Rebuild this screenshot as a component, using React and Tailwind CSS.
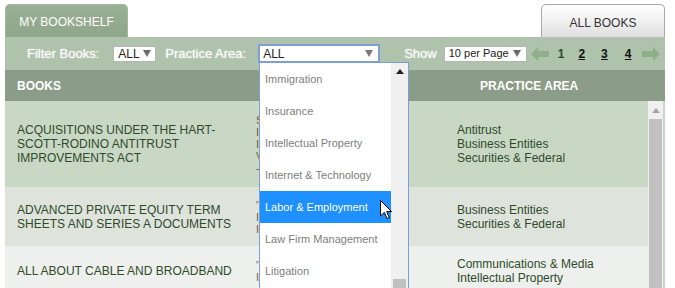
import React from "react";

const F = { fontFamily: '"Liberation Sans", Arial, sans-serif' };

function Arrow({ dir }) {
  return (
    <svg width="18" height="14" viewBox="0 0 18 14">
      {dir === "left" ? (
        <path d="M0 7 L7 0 L7 4 L18 4 L18 10 L7 10 L7 14 Z" fill="#8fae8a" />
      ) : (
        <path d="M18 7 L11 0 L11 4 L0 4 L0 10 L11 10 L11 14 Z" fill="#8fae8a" />
      )}
    </svg>
  );
}

function Caret({ color = "#6b6b6b" }) {
  return (
    <svg width="8" height="7" viewBox="0 0 8 7" className="shrink-0">
      <path d="M0 0 L8 0 L4 7 Z" fill={color} />
    </svg>
  );
}

const rows = [
  {
    h: "h-[86px]",
    bg: "bg-[#c9d8c5]",
    title: ["ACQUISITIONS UNDER THE HART-", "SCOTT-RODINO ANTITRUST", "IMPROVEMENTS ACT"],
    mid: ["Supplement", "Issue 2016", "Index", "Volume 1", "- more"],
    area: ["Antitrust", "Business Entities", "Securities & Federal"],
  },
  {
    h: "h-[59px]",
    bg: "bg-[#dee3dc]",
    title: ["ADVANCED PRIVATE EQUITY TERM", "SHEETS AND SERIES A DOCUMENTS"],
    mid: ["'Year", "Issue", "Index"],
    area: ["Business Entities", "Securities & Federal"],
  },
  {
    h: "h-[50px]",
    bg: "bg-[#edf0ec]",
    title: ["ALL ABOUT CABLE AND BROADBAND"],
    mid: ["'Year", "Issue"],
    area: ["Communications & Media", "Intellectual Property"],
  },
];

const options = [
  "Immigration",
  "Insurance",
  "Intellectual Property",
  "Internet & Technology",
  "Labor & Employment",
  "Law Firm Management",
  "Litigation",
];

export default function App() {
  return (
    <div style={F} className="relative w-[675px] h-[288px] overflow-hidden bg-white pt-[4px] pl-[5px] pr-[10px]">
      {/* tabs */}
      <div className="flex justify-between h-[33px] items-end">
        <div className="w-[123px] h-[33px] rounded-t-[5px] bg-gradient-to-b from-[#9bb097] to-[#8ea68a] border border-[#a4b6a0] border-b-0 flex items-center justify-center text-white text-[12px] pt-[2px]">
          MY BOOKSHELF
        </div>
        <div className="w-[124px] h-[33px] rounded-t-[5px] bg-gradient-to-b from-[#ffffff] via-[#f1f1f1] to-[#dedede] border border-[#a9a9a9] border-b-0 flex items-center justify-center text-[#333] text-[12px] pt-[3px]">
          ALL BOOKS
        </div>
      </div>

      {/* filter bar */}
      <div className="h-[33px] bg-[#afc2ab] flex items-center whitespace-nowrap text-white text-[13px] [text-shadow:0_0_2px_rgba(255,255,255,0.6)]">
        <span className="shrink-0 ml-[22px]">Filter Books:</span>
        <div className="shrink-0 ml-[14px] w-[43px] h-[16px] bg-white border border-[#b5b5b5] flex items-center justify-between pl-[4px] pr-[4px] text-[#222] text-[12px] [text-shadow:none]">
          <span>ALL</span>
          <Caret />
        </div>
        <span className="shrink-0 ml-[9px]">Practice Area:</span>
        <div className="shrink-0 ml-[12px] w-[122px] h-[19px] bg-white border-[2px] border-[#7c9fd6] flex items-center justify-between pl-[3px] pr-[5px] text-[#222] text-[12px] [text-shadow:none]">
          <span>ALL</span>
          <Caret color="#7a7a7a" />
        </div>
        <span className="shrink-0 ml-[24px]">Show</span>
        <div className="shrink-0 ml-[7px] w-[83px] h-[16px] bg-white border border-[#b5b5b5] flex items-center justify-between pl-[4px] pr-[5px] text-[#222] text-[11px] [text-shadow:none]">
          <span>10 per Page</span>
          <Caret />
        </div>
        <span className="shrink-0 ml-[4px] flex items-center">
          <Arrow dir="left" />
        </span>
        <span className="shrink-0 ml-[9px] text-[#1f4f1f] text-[12px] font-bold [text-shadow:none]">1</span>
        <span className="shrink-0 ml-[14px] text-[#111] text-[12px] font-bold underline [text-shadow:none]">2</span>
        <span className="shrink-0 ml-[16px] text-[#111] text-[12px] font-bold underline [text-shadow:none]">3</span>
        <span className="shrink-0 ml-[17px] text-[#111] text-[12px] font-bold underline [text-shadow:none]">4</span>
        <span className="shrink-0 ml-[11px] flex items-center">
          <Arrow dir="right" />
        </span>
      </div>

      {/* header */}
      <div className="h-[31px] bg-[#8b9c88] flex items-center text-white text-[12px] font-bold">
        <div className="w-[452px] pl-[12px]">BOOKS</div>
        <div className="pl-[23px]">PRACTICE AREA</div>
      </div>

      {/* body */}
      <div className="flex border-r-[2px] border-[#c9d8c5]">
        <div className="flex-1 flex flex-col">
          {rows.map((r, i) => (
            <div key={i} className={`${r.h} ${r.bg} flex items-center text-[12px] leading-[14px] text-[#2f4a2b]`}>
              <div className="w-[251px] shrink-0 pl-[12px]">
                {r.title.map((t) => (
                  <div key={t}>{t}</div>
                ))}
              </div>
              <div className="w-[201px] shrink-0">
                <div className="w-[3px] overflow-hidden whitespace-nowrap text-[#7a5a2a] text-[11px] leading-[12px]">
                  {r.mid.map((t) => (
                    <div key={t}>{t}</div>
                  ))}
                </div>
              </div>
              <div>
                {r.area.map((t) => (
                  <div key={t}>{t}</div>
                ))}
              </div>
            </div>
          ))}
        </div>
        <div className="w-[15px] bg-[#f0f0f0] flex flex-col items-center">
          <div className="h-[18px] flex items-center justify-center">
            <svg width="8" height="5" viewBox="0 0 8 5">
              <path d="M0 5 L4 0 L8 5 Z" fill="#a3a3a3" />
            </svg>
          </div>
          <div className="w-[13px] flex-1 bg-[#c1c1c1]" />
        </div>
      </div>

      {/* dropdown list */}
      <div className="absolute left-[259px] top-[62px] w-[150px] h-[240px] bg-white border border-[#7c9fd6] flex">
        <div className="flex-1 flex flex-col">
          {options.map((o) => (
            <div
              key={o}
              className={`h-[32px] flex items-center pl-[5px] text-[11px] ${
                o === "Labor & Employment" ? "bg-[#1e90ff] text-white" : "text-[#808080]"
              }`}
            >
              {o}
            </div>
          ))}
        </div>
        <div className="w-[17px] bg-[#f0f0f0] flex flex-col items-center justify-between">
          <div className="h-[16px] flex items-center justify-center">
            <svg width="8" height="5" viewBox="0 0 8 5">
              <path d="M0 5 L4 0 L8 5 Z" fill="#222" />
            </svg>
          </div>
          <div className="w-[13px] h-[20px] bg-[#c1c1c1] mb-[2px]" />
        </div>
      </div>

      {/* mouse cursor */}
      <svg className="absolute left-[380px] top-[200px]" width="13" height="20" viewBox="0 0 13 20">
        <path d="M0.5 0.5 L0.5 16 L4.3 12.4 L7 18.5 L9.3 17.5 L6.7 11.6 L11.7 11.6 Z" fill="#fff" stroke="#000" strokeWidth="1" strokeLinejoin="miter" />
      </svg>
    </div>
  );
}
